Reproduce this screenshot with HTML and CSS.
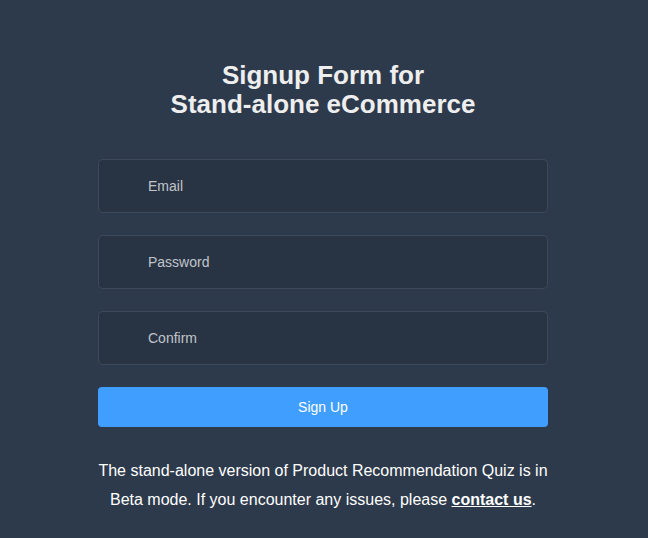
FILE: index.html
```html
<!DOCTYPE html>
<html>
<head>
<meta charset="utf-8">
<link rel="stylesheet" href="styles.css">
</head>
<body>
<div class="page">
  <form class="login-form">
    <h3 class="title">Signup Form for<br>Stand-alone eCommerce</h3>
    <div class="field"><input type="text" placeholder="Email"></div>
    <div class="field"><input type="password" placeholder="Password"></div>
    <div class="field"><input type="password" placeholder="Confirm"></div>
    <button type="button" class="btn">Sign Up</button>
    <p class="note">The stand-alone version of Product Recommendation Quiz is in Beta mode. If you encounter any issues, please <a href="#">contact us</a>.</p>
  </form>
</div>
</body>
</html>
```

FILE: styles.css
```css
html, body {
  margin: 0;
  padding: 0;
  height: 100%;
  background: #2d3a4b;
  font-family: "Liberation Sans", Arial, sans-serif;
}
.page {
  min-height: 100%;
  overflow: hidden;
}
.login-form {
  width: 450px;
  margin: 0 auto;
  padding: 61px 0 0;
  transform: translateX(-1px);
}
.title {
  font-size: 26px;
  line-height: 29px;
  color: #eee;
  text-align: center;
  font-weight: bold;
  margin: 0 0 40px;
}
.field {
  height: 52px;
  border: 1px solid rgba(255, 255, 255, 0.1);
  background: rgba(0, 0, 0, 0.1);
  border-radius: 5px;
  margin-bottom: 22px;
  display: flex;
  align-items: center;
}
.field input {
  background: transparent;
  border: 0;
  outline: none;
  width: 100%;
  height: 100%;
  padding: 0 0 0 49px;
  color: #eee;
  font-family: "Liberation Sans", Arial, sans-serif;
  font-size: 14px;
}
.field input::placeholder {
  color: #c0c4cc;
  opacity: 1;
}
.btn {
  display: block;
  width: 100%;
  height: 40px;
  border: 0;
  border-radius: 4px;
  background: #409eff;
  color: #fff;
  font-family: "Liberation Sans", Arial, sans-serif;
  font-size: 14px;
  margin: 0 0 29px;
  cursor: pointer;
}
.note {
  margin: 0;
  color: #fff;
  font-size: 16px;
  line-height: 29px;
  text-align: center;
}
.note a {
  color: #fff;
  font-weight: bold;
  text-decoration: underline;
}
```
